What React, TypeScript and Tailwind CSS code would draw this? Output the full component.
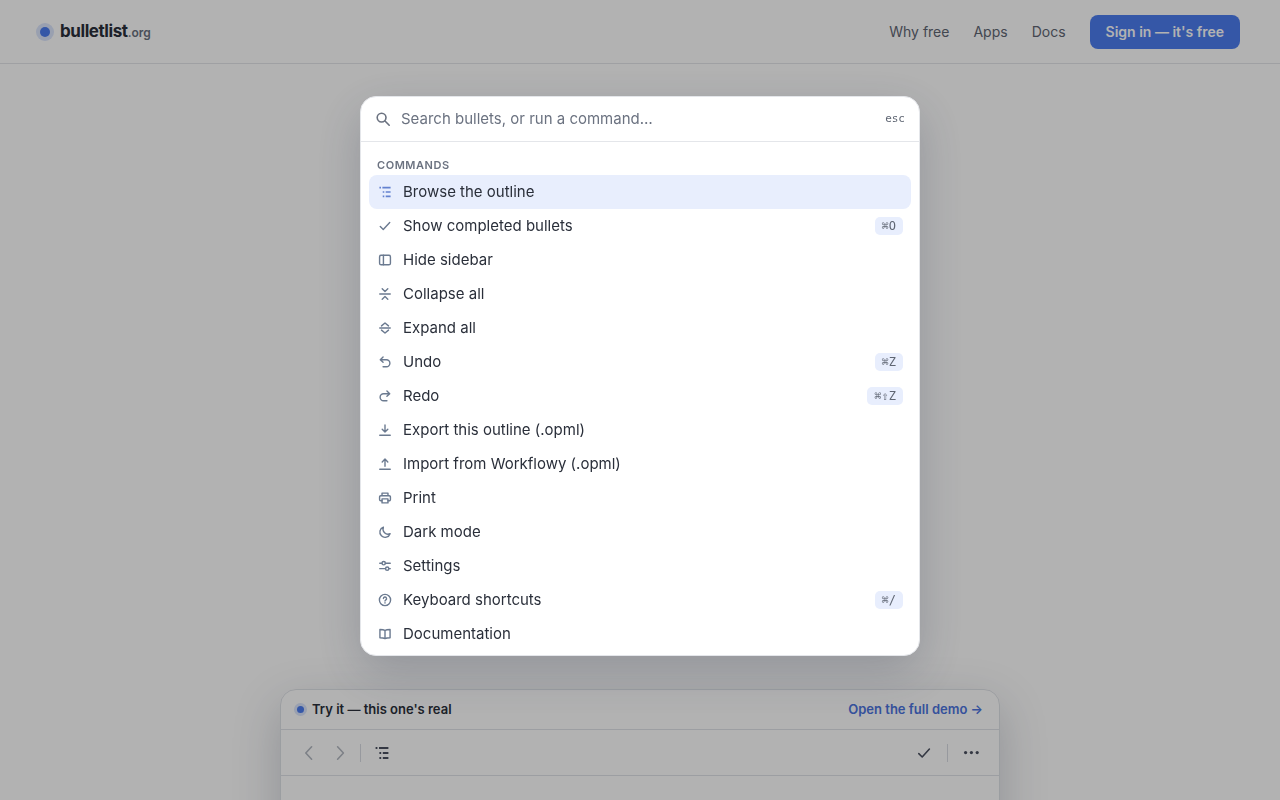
import type { ReactNode } from "react";

type Command = {
  label: string;
  icon: ReactNode;
  keys?: string;
};

const commands: Command[] = [
  {
    label: "Browse the outline",
    icon: <OutlinePaths />,
  },
  { label: "Show completed bullets", keys: "⌘O", icon: <path d="M2.6 8.6l3.4 3.4 7.4-8" /> },
  {
    label: "Hide sidebar",
    icon: (
      <>
        <rect x="1.8" y="2.6" width="12.4" height="10.8" rx="1.8" />
        <path d="M6.2 2.6v10.8" />
      </>
    ),
  },
  {
    label: "Collapse all",
    icon: <path d="M2 8h12M4.8 2L8 5.2 11.2 2M4.8 14L8 10.8l3.2 3.2" />,
  },
  {
    label: "Expand all",
    icon: <path d="M2 8h12M4 5.6l4-3.4 4 3.4M4 10.4l4 3.4 4-3.4" />,
  },
  {
    label: "Undo",
    keys: "⌘Z",
    icon: <path d="M5.8 2.4L2.6 5.4l3.2 3M2.8 5.4h6.8a4 4 0 0 1 0 8H5.8" />,
  },
  {
    label: "Redo",
    keys: "⌘⇧Z",
    icon: <path d="M10.2 2.4l3.2 3-3.2 3M13.2 5.4H6.4a4 4 0 0 0 0 8h3.8" />,
  },
  {
    label: "Export this outline (.opml)",
    icon: <path d="M8 2.2v8M4.8 7.2L8 10.4l3.2-3.2M2 14h12" />,
  },
  {
    label: "Import from Workflowy (.opml)",
    icon: <path d="M8 10.6V2.4M4.8 5.6L8 2.4l3.2 3.2M2 14h12" />,
  },
  {
    label: "Print",
    icon: (
      <>
        <path d="M4.6 5.4V2.4h6.8v3M4.6 11.2H3.2a1.4 1.4 0 0 1-1.4-1.4V6.8a1.4 1.4 0 0 1 1.4-1.4h9.6a1.4 1.4 0 0 1 1.4 1.4v3a1.4 1.4 0 0 1-1.4 1.4h-1.4" />
        <path d="M4.6 9h6.8v4.6H4.6z" />
      </>
    ),
  },
  {
    label: "Dark mode",
    icon: <path d="M6.2 2.4a6 6 0 1 0 7.6 7.6A5.8 5.8 0 0 1 6.2 2.4z" />,
  },
  {
    label: "Settings",
    icon: (
      <>
        <path d="M2 4.8h2.6M8.4 4.8H14M2 11h6.6M12.4 11H14" />
        <circle cx="6.5" cy="4.8" r="1.9" />
        <circle cx="10.5" cy="11" r="1.9" />
      </>
    ),
  },
  {
    label: "Keyboard shortcuts",
    keys: "⌘/",
    icon: (
      <>
        <circle cx="8" cy="8" r="6.4" />
        <path d="M6.2 6.4a1.8 1.8 0 1 1 2.6 1.6c-.5.3-.8.6-.8 1.1M8 11.2v.2" />
      </>
    ),
  },
  {
    label: "Documentation",
    icon: (
      <path d="M8 4v9.2M8 4C6.6 3 4.6 2.8 2.2 2.8v9.4c2.4 0 4.4.2 5.8 1 1.4-.8 3.4-1 5.8-1V2.8C11.4 2.8 9.4 3 8 4z" />
    ),
  },
];

const navItems = ["Why free", "Apps", "Docs"];

function Icon({ children, className }: { children: ReactNode; className: string }) {
  return (
    <svg
      viewBox="0 0 16 16"
      fill="none"
      stroke="currentColor"
      strokeWidth="1.6"
      strokeLinecap="round"
      strokeLinejoin="round"
      aria-hidden
      className={className}
    >
      {children}
    </svg>
  );
}

function OutlinePaths() {
  return (
    <path
      strokeLinecap="butt"
      strokeWidth="1.8"
      d="M1.6 3h1.8M5 3h9.4M5.4 8h1.8M8.8 8h5.6M5.4 13h1.8M8.8 13h5.6"
    />
  );
}

function SiteHeader() {
  return (
    <header className="flex h-16 items-center justify-between border-b border-[#e4e6ea] px-10">
      <a href="#" className="flex items-center gap-2.5">
        <span className="size-2.5 rounded-full bg-[#4c7df0] ring-4 ring-[#dbe5fc]" />
        <span className="text-[17px] font-bold tracking-tight text-[#2a2f3a]">
          bulletlist<span className="text-xs font-semibold tracking-normal text-[#6b7280]">.org</span>
        </span>
      </a>
      <nav className="flex items-center gap-6 text-sm text-[#5f6673]">
        {navItems.map((item) => (
          <a key={item} href="#">
            {item}
          </a>
        ))}
        <a
          href="#"
          className="flex h-[34px] items-center rounded-lg bg-[#4c7df0] px-4 font-semibold text-white"
        >
          Sign in — it's free
        </a>
      </nav>
    </header>
  );
}

function DemoCard() {
  return (
    <section className="mx-auto h-[480px] w-full max-w-[720px] overflow-hidden rounded-2xl border border-[#dfe2e7] shadow-[0_16px_48px_rgba(30,41,70,0.22)]">
      <div className="flex h-10 items-center justify-between border-b border-[#e0e3e8] px-4 text-[13px] font-semibold">
        <h2 className="flex items-center gap-2 text-[#2a2f3a]">
          <span className="size-[7px] rounded-full bg-[#4c7df0] ring-3 ring-[#dbe5fc]" />
          Try it — this one's real
        </h2>
        <a href="#" className="text-[#4c74e0]">
          Open the full demo →
        </a>
      </div>
      <div className="flex h-[46px] items-center justify-between border-b border-[#e0e3e8] px-3 text-[#4b5160]">
        <div className="flex items-center">
          <button type="button" aria-label="Back" className="grid size-8 place-items-center text-[#b4b9c2]">
            <Icon className="size-4">
              <path d="M10.6 1.8L4.8 8l5.8 6.2" />
            </Icon>
          </button>
          <button type="button" aria-label="Forward" className="grid size-8 place-items-center text-[#b4b9c2]">
            <Icon className="size-4">
              <path d="M4.6 1.8L10.4 8l-5.8 6.2" />
            </Icon>
          </button>
          <span className="mr-[5px] ml-[3px] h-[18px] w-px bg-[#d9dce2]" />
          <button type="button" aria-label="Outline" className="grid size-8 place-items-center">
            <Icon className="size-4">
              <OutlinePaths />
            </Icon>
          </button>
        </div>
        <div className="flex items-center">
          <button type="button" aria-label="Show completed" className="grid size-8 place-items-center">
            <Icon className="size-4">
              <path d="M2.8 8.6l3.4 3.4 7.2-8" />
            </Icon>
          </button>
          <span className="mx-[7px] h-[18px] w-px bg-[#d9dce2]" />
          <button type="button" aria-label="More" className="grid size-8 place-items-center">
            <svg viewBox="0 0 16 16" fill="currentColor" aria-hidden className="size-4">
              <circle cx="2.6" cy="7.6" r="1.6" />
              <circle cx="8.4" cy="7.6" r="1.6" />
              <circle cx="14.2" cy="7.6" r="1.6" />
            </svg>
          </button>
        </div>
      </div>
    </section>
  );
}

function CommandPalette() {
  return (
    <div
      role="dialog"
      aria-label="Command palette"
      className="flex max-h-[70vh] w-full max-w-[560px] flex-col overflow-hidden rounded-2xl border border-[#e4e6ea] bg-white shadow-[0_16px_48px_rgba(30,41,70,0.22)]"
    >
      <div className="flex h-[45px] shrink-0 items-center gap-2.5 border-b border-[#e4e6ea] px-3.5">
        <Icon className="size-4 text-[#6b7280]">
          <circle cx="6.6" cy="6.6" r="4.4" />
          <path d="M10 10l4.2 4.2" />
        </Icon>
        <input
          type="text"
          aria-label="Search bullets, or run a command"
          placeholder="Search bullets, or run a command…"
          className="min-w-0 flex-1 text-[15px] text-[#2a2f3a] outline-none placeholder:text-[#6b7280]"
        />
        <kbd className="font-['DejaVu_Sans_Mono',monospace] text-[11px] text-[#5f6673]">esc</kbd>
      </div>
      <div className="min-h-0 flex-1 overflow-hidden px-2 pt-4 pb-2">
        <h2 className="px-2 pb-0.5 text-[11px] leading-[15px] font-semibold tracking-wider text-[#6b7280] uppercase">
          Commands
        </h2>
        <ul>
          {commands.map(({ label, icon, keys }, i) => (
            <li key={label}>
              <button
                type="button"
                className={
                  i === 0
                    ? "flex h-[34px] w-full items-center gap-2.5 rounded-lg bg-[#e8eefd] px-2 text-left text-[15px] text-[#2a2f3a]"
                    : "flex h-[34px] w-full items-center gap-2.5 rounded-lg px-2 text-left text-[15px] text-[#2a2f3a]"
                }
              >
                <span className="grid w-4 place-items-center">
                  <Icon className={i === 0 ? "size-3.5 text-[#6482d0]" : "size-3.5 text-[#6b7a90]"}>{icon}</Icon>
                </span>
                <span className="flex-1">{label}</span>
                {keys && (
                  <kbd className="rounded-[5px] bg-[#e8eefd] px-[7px] font-['DejaVu_Sans_Mono',monospace] text-xs leading-[18px] text-[#5f6673]">
                    {keys}
                  </kbd>
                )}
              </button>
            </li>
          ))}
        </ul>
      </div>
    </div>
  );
}

export default function App() {
  return (
    <div className="h-screen overflow-hidden bg-white font-['Inter',sans-serif]">
      <SiteHeader />
      <main className="pt-[625px]">
        <DemoCard />
      </main>
      <div className="fixed inset-0 flex items-start justify-center bg-black/30 pt-[12vh]">
        <CommandPalette />
      </div>
    </div>
  );
}
